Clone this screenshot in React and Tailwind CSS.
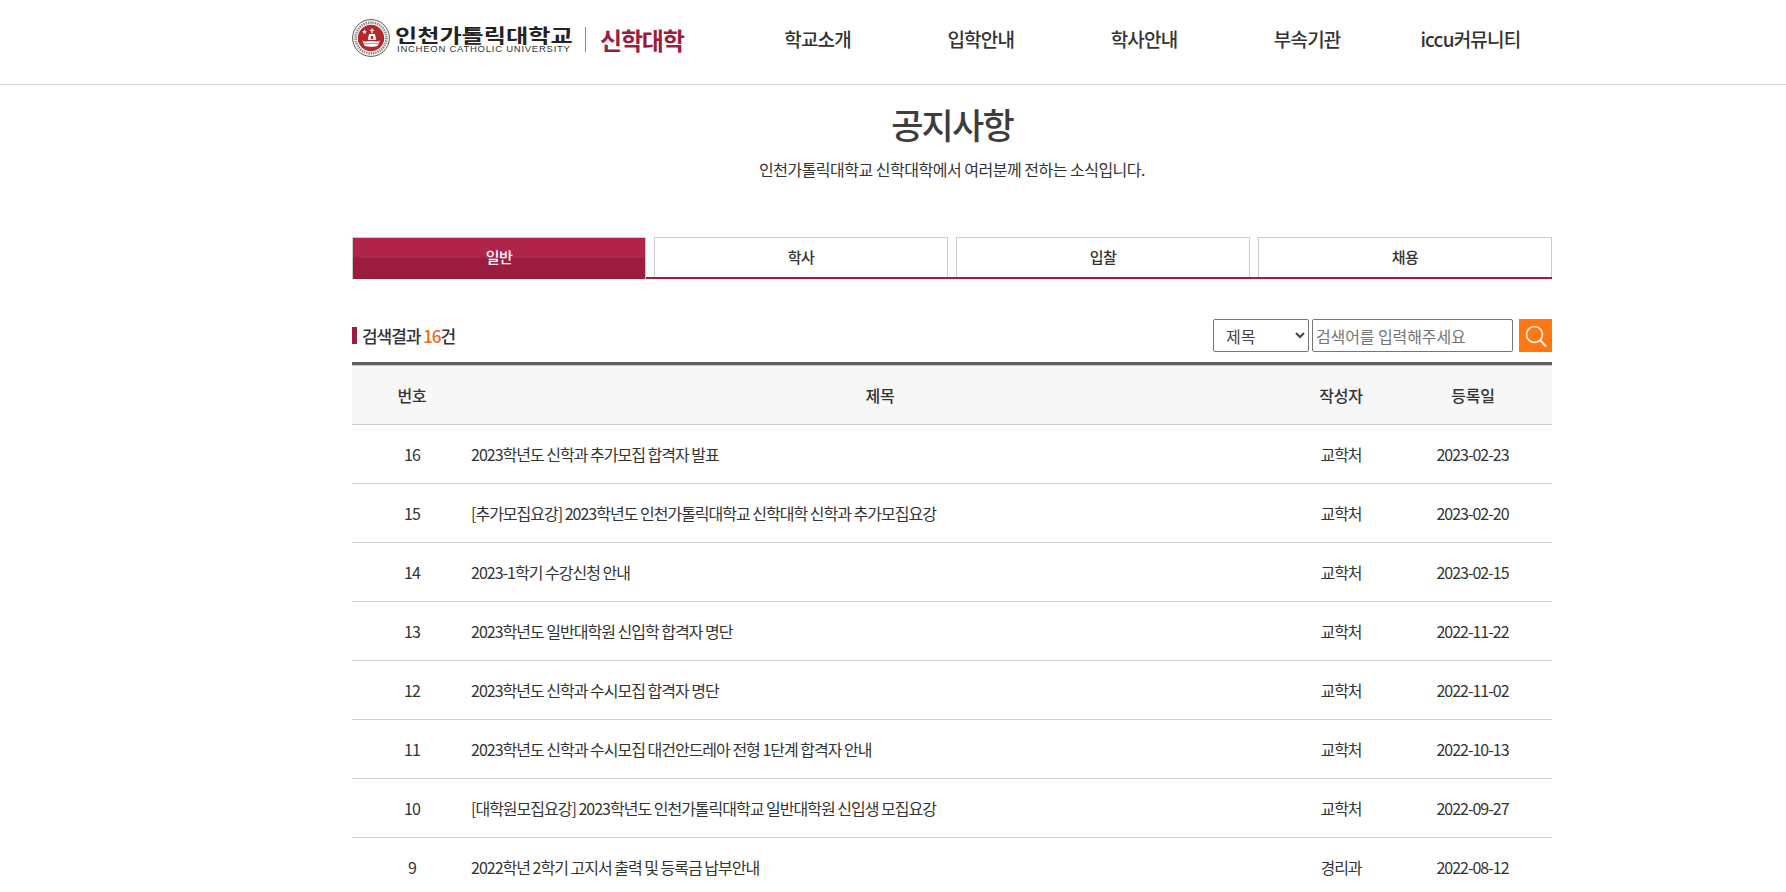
import React from "react";

const NAV = ["학교소개", "입학안내", "학사안내", "부속기관", "iccu커뮤니티"];
const TABS = ["일반", "학사", "입찰", "채용"];
const ROWS = [
  { no: 16, title: "2023학년도 신학과 추가모집 합격자 발표", by: "교학처", date: "2023-02-23" },
  { no: 15, title: "[추가모집요강] 2023학년도 인천가톨릭대학교 신학대학 신학과 추가모집요강", by: "교학처", date: "2023-02-20" },
  { no: 14, title: "2023-1학기 수강신청 안내", by: "교학처", date: "2023-02-15" },
  { no: 13, title: "2023학년도 일반대학원 신입학 합격자 명단", by: "교학처", date: "2022-11-22" },
  { no: 12, title: "2023학년도 신학과 수시모집 합격자 명단", by: "교학처", date: "2022-11-02" },
  { no: 11, title: "2023학년도 신학과 수시모집 대건안드레아 전형 1단계 합격자 안내", by: "교학처", date: "2022-10-13" },
  { no: 10, title: "[대학원모집요강] 2023학년도 인천가톨릭대학교 일반대학원 신입생 모집요강", by: "교학처", date: "2022-09-27" },
  { no: 9, title: "2022학년 2학기 고지서 출력 및 등록금 납부안내", by: "경리과", date: "2022-08-12" },
];

function Seal() {
  return (
    <svg width="38" height="38" viewBox="0 0 38 38">
      <circle cx="19" cy="19" r="18.4" fill="#fff" stroke="#444" strokeWidth="0.9" />
      <circle cx="19" cy="19" r="15.4" fill="none" stroke="#888" strokeWidth="2.6" strokeDasharray="1.4 0.9" />
      <circle cx="19" cy="19" r="13.2" fill="#b32a2c" />
      <path d="M20 9.5v5M18 11.3h4" stroke="#fff" strokeWidth="1.1" fill="none" />
      <path d="M17 15h6l1.2 6h-8.4z" fill="#fff" />
      <path d="M18.8 17h2.4v3h-2.4z" fill="#b32a2c" />
      <path d="M10.5 21.5c3 2 6 .6 9 .6s6 1.4 8.5-.6l-2.2 5.2c-2.400 1.500-11 1.500-13.300 0z" fill="#fff" />
      <path d="M11.500 24.200c2.500 1 5 .2 7.800.2s5.200.8 7.500-.2" stroke="#b32a2c" strokeWidth="0.6" fill="none" />
      <path d="M12.500 10.500l.7 1.500 1.600.2-1.200 1.100.3 1.600-1.400-.8-1.400.8.300-1.600-1.200-1.100 1.600-.2z" fill="#fff" />
    </svg>
  );
}

export default function App() {
  return (
    <div className="h-[892px] overflow-hidden bg-white text-[#333] font-['Noto_Sans_CJK_KR','Noto_Sans',sans-serif]">
      <header className="h-[85px] border-b border-[#d5d5d5]">
        <div className="w-[1200px] ml-[352px] flex">
          <div className="w-[384px] flex items-start">
            <div className="mt-[19px]">
              <Seal />
            </div>
            <div className="ml-[5px] mt-[25px] w-[178px]">
              <div className="text-[19px] leading-[20px] font-bold text-[#222] whitespace-nowrap origin-left scale-x-[1.27]">인천가톨릭대학교</div>
              <div className="ml-[2px] text-[9.5px] leading-[8px] tracking-[0.75px] text-[#333] whitespace-nowrap font-['Liberation_Sans',sans-serif]">INCHEON CATHOLIC UNIVERSITY</div>
            </div>
            <div className="w-px h-[25px] bg-[#888] mt-[27px] ml-[12px] mr-[14px]" />
            <div className="mt-[25px] text-[24px] font-bold leading-[30px] text-[#9b1c3e] tracking-[-1.2px] whitespace-nowrap">신학대학</div>
          </div>
          <nav className="w-[816px] grid grid-cols-5 pt-[25px]">
            {NAV.map((n) => (
              <div key={n} className="text-center text-[19px] leading-[28px] font-medium text-[#333] tracking-[-0.8px] whitespace-nowrap">{n}</div>
            ))}
          </nav>
        </div>
      </header>

      <main className="w-[1200px] ml-[352px]">
        <h1 className="mt-[17px] text-center text-[35px] leading-[44px] font-medium tracking-[-1.8px] text-[#3d3d3d]">공지사항</h1>
        <p className="mt-[11px] text-center text-[16px] leading-[24px] tracking-[-0.5px] text-[#333]">인천가톨릭대학교 신학대학에서 여러분께 전하는 소식입니다.</p>

        <div className="mt-[56px] flex gap-2 h-[42px] border-b-2 border-[#9b1c3e]">
          {TABS.map((t, i) =>
            i === 0 ? (
              <div key={t} className="relative flex-1 -mb-[2px] border-x border-t border-[#ccc] bg-[#b12449]">
                <div className="absolute inset-x-0 top-[20px] bottom-0 bg-[#9b1c3e]" />
                <div className="relative text-center text-[15px] leading-[38px] font-medium text-white tracking-[-0.5px]">{t}</div>
              </div>
            ) : (
              <div key={t} className="flex-1 border-x border-t border-[#ccc] text-center text-[15px] leading-[38px] font-medium text-[#333] tracking-[-0.5px]">{t}</div>
            )
          )}
        </div>

        <div className="mt-[40px] h-[33px] flex items-center justify-between">
          <div className="flex items-center">
            <span className="w-[5px] h-[17px] bg-[#9b1c3e] mr-[5px]" />
            <span className="text-[17px] font-medium tracking-[-1.05px] text-[#333]">검색결과 <span className="text-[#f26522]">16</span>건</span>
          </div>
          <div className="flex items-center h-[33px]">
            <select className="w-[96px] h-[33px] border border-[#767676] rounded-[2px] text-[16px] pl-[8px] text-[#444] bg-white">
              <option>제목</option>
              <option>내용</option>
            </select>
            <input
              className="ml-[3px] w-[201px] h-[33px] border border-[#767676] rounded-[2px] text-[16px] tracking-[-0.1px] pl-[3px] pr-[4px] placeholder:text-[#757575]"
              placeholder="검색어를 입력해주세요"
            />
            <button className="ml-[6px] w-[33px] h-[33px] bg-[#ff7613] flex items-center justify-center">
              <svg width="22" height="22" viewBox="0 0 22 22" fill="none" stroke="#fff1e6" strokeWidth="1.6" strokeLinecap="round">
                <circle cx="9.5" cy="9.500" r="8" />
                <path d="M15.500 15.500l5 5.500" strokeWidth="2" />
              </svg>
            </button>
          </div>
        </div>

        <div className="mt-[10px] border-t-[3px] border-[#5f5f5f]">
          <div className="grid grid-cols-[120px_816px_106px_158px] h-[60px] items-center bg-[#f7f7f7] border-t border-b border-[#ccc] text-center text-[16px] font-medium tracking-[-0.3px] text-[#333]">
            <div>번호</div>
            <div>제목</div>
            <div>작성자</div>
            <div>등록일</div>
          </div>
          {ROWS.map((r) => (
            <div key={r.no} className="grid grid-cols-[120px_816px_106px_158px] h-[59px] items-center border-b border-[#d2d2d2] text-[16px] tracking-[-1px] text-[#333]">
              <div className="text-center">{r.no}</div>
              <div className="-ml-px whitespace-nowrap">{r.title}</div>
              <div className="text-center">{r.by}</div>
              <div className="text-center pr-px">{r.date}</div>
            </div>
          ))}
        </div>
      </main>
    </div>
  );
}
